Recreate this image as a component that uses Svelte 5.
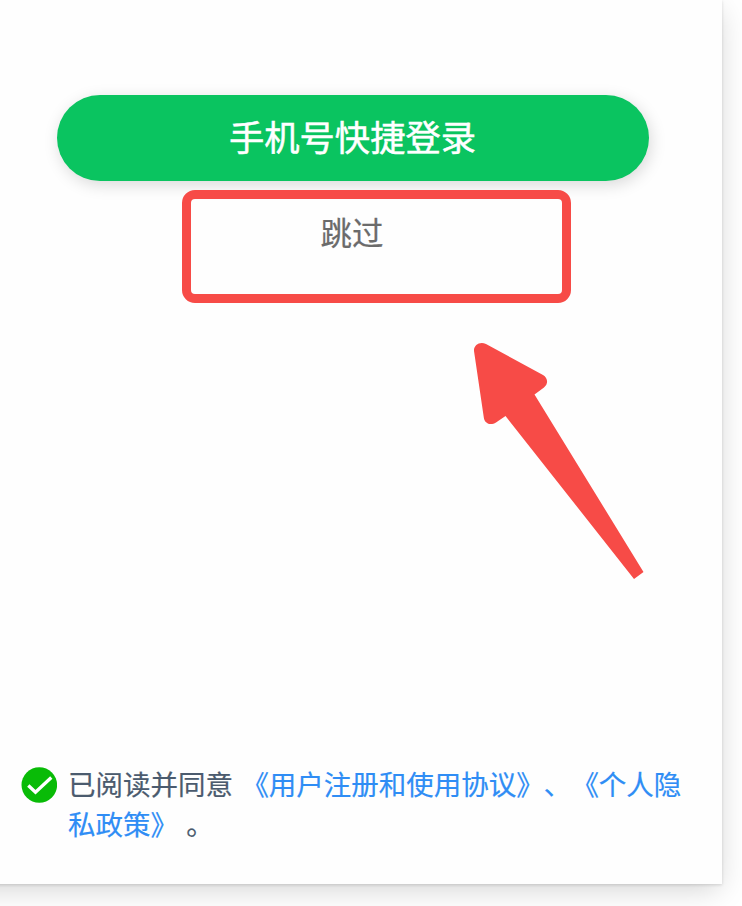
<script lang="ts">
  let agreed = $state(true);

  const toggleAgreed = () => {
    agreed = !agreed;
  };
</script>

<main class="page">
  <section class="login">
    <button type="button" class="primary">手机号快捷登录</button>
    <button type="button" class="skip">跳过</button>

    <footer class="agreement">
      <button
        type="button"
        class="check"
        role="checkbox"
        aria-checked={agreed}
        aria-label="同意协议"
        onclick={toggleAgreed}
      >
        <svg viewBox="0 0 36 36" aria-hidden="true">
          <circle cx="18.3" cy="18" r="17.8" fill={agreed ? '#09bb07' : '#c9c9c9'} />
          <path d="M7.300 18.500 14.500 25.300 30.300 10.500" fill="none" stroke="#fff" stroke-width="3.3" />
        </svg>
      </button>
      <p>已阅读并同意 <a href="#terms">《用户注册和使用协议》、</a><a href="#privacy">《个人隐私政策》</a> 。</p>
    </footer>
  </section>

  <div class="highlight"></div>
  <svg class="arrow" viewBox="0 0 172 238" aria-hidden="true">
    <path
      d="M2 10C1.500 4 8 0 14 3L71 34C76 37 76.500 43 72 46.500L62.500 53.500 171.500 231 162 238 33.500 75 24 81.500C18.500 85 12.500 82.500 11.800 76.500Z"
      fill="#f74b47"
    />
  </svg>
</main>

<style>
  :global(body) {
    margin: 0;
    background: #fff;
  }

  .page {
    position: relative;
    height: 906px;
    overflow: hidden;
    font-family: 'Noto Sans CJK SC', sans-serif;
    text-spacing-trim: space-all;
  }

  /* the card runs past the left edge of the page */
  .login {
    box-sizing: border-box;
    width: 762px;
    height: 884px;
    margin-left: -40px;
    padding: 95px 0 0 40px;
    display: flex;
    flex-direction: column;
    background: #fefefe;
    box-shadow: 0 8px 28px -3px rgba(0, 0, 0, 0.18), 0 1px 3px rgba(0, 0, 0, 0.14);
  }

  button {
    padding: 0;
    border: 0;
    background: none;
    font-family: inherit;
    cursor: pointer;
  }

  .primary {
    box-sizing: border-box;
    width: 592px;
    height: 86px;
    margin-left: 57px;
    padding: 0 1px 4px 0;
    flex: none;
    border-radius: 43px;
    background: #0ac460;
    color: #fff;
    font-size: 35.3px;
    line-height: 82px;
    -webkit-text-stroke: 0.5px currentColor;
    box-shadow: 2px 4px 16px rgba(0, 0, 0, 0.15);
  }

  .skip {
    width: 120px;
    height: 50px;
    margin: 25px 0 0 292px;
    color: #6b6b6b;
    font-size: 31.5px;
    line-height: 50px;
    -webkit-text-stroke: 0.2px currentColor;
  }

  .agreement {
    display: flex;
    gap: 11px;
    margin: auto 30px 41px 21px;
  }

  .check {
    width: 36px;
    height: 36px;
    margin-top: 4px;
    flex: none;
  }

  .check svg {
    display: block;
  }

  p {
    margin: 0;
    color: #4b5b6e;
    font-size: 27.5px;
    line-height: 40px;
    word-spacing: 2.2px;
    -webkit-text-stroke: 0.2px currentColor;
  }

  a {
    color: #2f8df5;
    text-decoration: none;
  }

  .highlight {
    position: absolute;
    left: 182px;
    top: 190px;
    box-sizing: border-box;
    width: 389px;
    height: 113px;
    border: 9px solid #f74b47;
    border-radius: 13px;
    pointer-events: none;
  }

  .arrow {
    position: absolute;
    left: 472px;
    top: 341px;
    width: 172px;
    height: 238px;
    pointer-events: none;
  }
</style>
